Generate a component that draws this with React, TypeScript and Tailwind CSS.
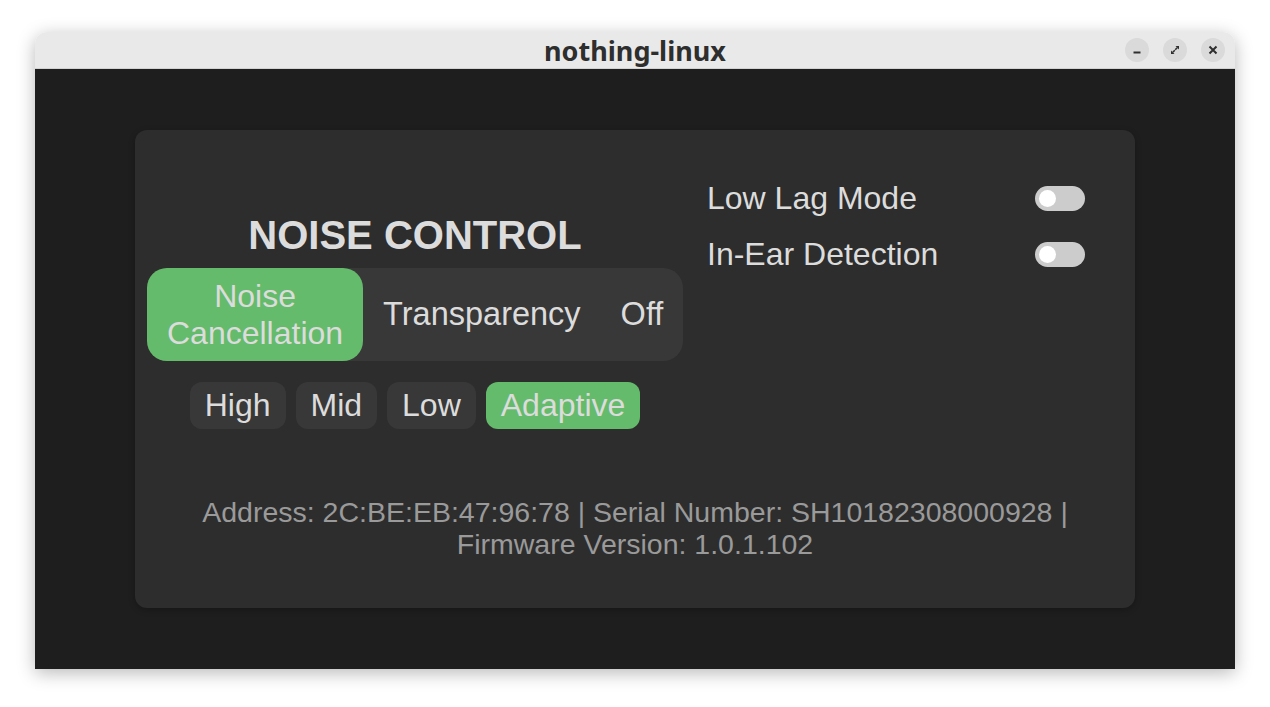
import React, { useState } from 'react';

const SANS = { fontFamily: '"Liberation Sans", Arial, sans-serif' };

const Toggle: React.FC<{ on: boolean; onClick: () => void }> = ({ on, onClick }) => (
  <button
    type="button"
    onClick={onClick}
    className={`w-[50px] h-[25px] rounded-full flex items-center px-[4px] ${on ? 'bg-[#64bb6b] justify-end' : 'bg-[#cccccc] justify-start'}`}
  >
    <span className="w-[17px] h-[17px] rounded-full bg-white" />
  </button>
);

export default function App() {
  const [mode, setMode] = useState('nc');
  const [level, setLevel] = useState('Adaptive');
  const [lowLag, setLowLag] = useState(false);
  const [inEar, setInEar] = useState(false);

  const modes = [
    { id: 'nc', label: 'Noise Cancellation' },
    { id: 'tr', label: 'Transparency' },
    { id: 'off', label: 'Off' },
  ];

  return (
    <div className="w-[1270px] h-[707px] bg-white pt-[32px] pl-[35px]">
      {/* window */}
      <div className="w-[1200px] rounded-t-[12px] overflow-hidden shadow-[0_4px_18px_rgba(0,0,0,0.28)]">
        {/* title bar */}
        <div className="relative h-[37px] bg-[#e9e9e9] border-b border-[#d2d2d2] flex items-center justify-center">
          <span
            className="text-[27px] leading-[30px] font-bold text-[#2e2e2e] mt-[2px]"
            style={{ fontFamily: '"Noto Sans", "Open Sans", sans-serif' }}
          >
            nothing-linux
          </span>
          <div className="absolute right-[10px] top-0 h-full flex items-center gap-[14px]">
            <span className="w-[24px] h-[24px] rounded-full bg-[#dadada] flex items-center justify-center">
              <svg width="10" height="10" viewBox="0 0 10 10">
                <rect x="1.5" y="6.5" width="7" height="2" fill="#2e2e2e" />
              </svg>
            </span>
            <span className="w-[24px] h-[24px] rounded-full bg-[#dadada] flex items-center justify-center">
              <svg width="10" height="10" viewBox="0 0 10 10" fill="#2e2e2e">
                <path d="M5.5 1H9V4.5Z" />
                <path d="M4.5 9H1V5.5Z" />
                <path d="M7.2 2.8L5.2 4.8" stroke="#2e2e2e" strokeWidth="1.6" />
                <path d="M2.8 7.2L4.8 5.2" stroke="#2e2e2e" strokeWidth="1.6" />
              </svg>
            </span>
            <span className="w-[24px] h-[24px] rounded-full bg-[#dadada] flex items-center justify-center">
              <svg width="10" height="10" viewBox="0 0 10 10">
                <path d="M1.5 1.5L8.5 8.5M8.5 1.5L1.5 8.5" stroke="#2e2e2e" strokeWidth="2" />
              </svg>
            </span>
          </div>
        </div>

        {/* content */}
        <div className="h-[600px] bg-[#1e1e1e] pt-[61px] pl-[100px]" style={SANS}>
          <div className="w-[1000px] rounded-[12px] bg-[#2d2d2d] px-3 pt-[50px] pb-[48px] shadow-[0_2px_6px_rgba(0,0,0,0.25)]">
            <div className="flex">
              {/* left column */}
              <div className="w-[536px] flex flex-col items-center pt-[32px]">
                <h1 className="text-[40px] leading-[46px] font-bold text-[#dcdcdc]">NOISE CONTROL</h1>
                <div className="mt-[10px] w-full h-[93px] flex items-stretch rounded-[20px] bg-[#383838]">
                  {modes.map((m) => (
                    <button
                      key={m.id}
                      type="button"
                      onClick={() => setMode(m.id)}
                      className={`px-5 leading-[37px] text-[#dcdcdc] rounded-[20px] ${
                        m.id === 'nc' ? 'w-[218px] text-[32px]' : 'text-[32.5px]'
                      } ${mode === m.id ? 'bg-[#64bb6b]' : ''}`}
                    >
                      {m.label}
                    </button>
                  ))}
                </div>
                <div className="mt-[21px] flex gap-[10px]">
                  {['High', 'Mid', 'Low', 'Adaptive'].map((l) => (
                    <button
                      key={l}
                      type="button"
                      onClick={() => setLevel(l)}
                      className={`h-[47px] px-[15px] text-[32px] leading-[37px] text-[#dcdcdc] rounded-[12px] ${
                        level === l ? 'bg-[#64bb6b]' : 'bg-[#383838]'
                      }`}
                    >
                      {l}
                    </button>
                  ))}
                </div>
              </div>

              {/* right column */}
              <div className="ml-6 w-[378px] flex flex-col gap-[19px]">
                <div className="flex items-center justify-between h-[37px]">
                  <span className="text-[32px] leading-[37px] text-[#dcdcdc]">Low Lag Mode</span>
                  <Toggle on={lowLag} onClick={() => setLowLag(!lowLag)} />
                </div>
                <div className="flex items-center justify-between h-[37px]">
                  <span className="text-[32px] leading-[37px] text-[#dcdcdc]">In-Ear Detection</span>
                  <Toggle on={inEar} onClick={() => setInEar(!inEar)} />
                </div>
              </div>
            </div>

            <p className="mt-[67px] text-center text-[28.5px] leading-[32px] text-[#9a9a9a] px-[50px]">
              Address: 2C:BE:EB:47:96:78 | Serial Number: SH10182308000928 | Firmware Version: 1.0.1.102
            </p>
          </div>
        </div>
      </div>
    </div>
  );
}
